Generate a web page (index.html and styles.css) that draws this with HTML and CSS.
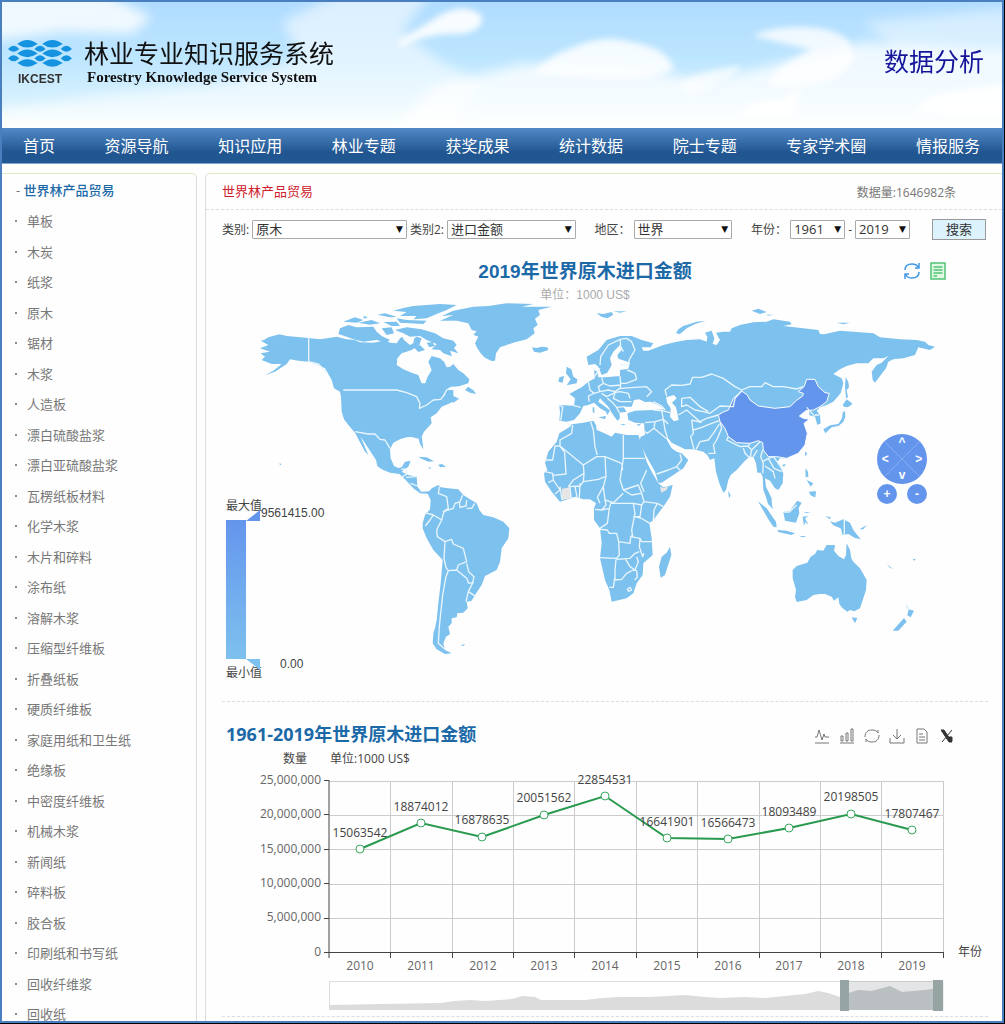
FILE: index.html
```html
<!DOCTYPE html>
<html lang="zh-CN">
<head>
  <meta charset="UTF-8">
  <meta name="viewport" content="width=device-width, initial-scale=1.0">
  <title>林业专业知识服务系统 - 数据分析</title>
  <link rel="stylesheet" href="styles.css">
</head>
<body>
<div class="page">

  <header class="banner">
    <!-- Sky behind the banner -->
    <svg class="sky" viewBox="0 0 1000 126" preserveAspectRatio="none" aria-hidden="true">
      <defs>
        <filter id="soft" x="-10%" y="-30%" width="120%" height="160%"><feGaussianBlur stdDeviation="6"/></filter>
        <filter id="crisp" x="-10%" y="-30%" width="120%" height="160%"><feGaussianBlur stdDeviation="3"/></filter>
      </defs>
      <g fill="#fff" filter="url(#soft)">
        <path d="M-20 -10H100L150 15L130 32L60 30L-20 40Z" opacity=".8"/>
        <path d="M280 20L340 -10H430L400 30L440 60L480 80L440 140H-20V110L120 90L230 80L300 55Z" opacity=".55"/>
        <path d="M430 85L520 62L640 66L700 80L760 66L860 40L1020 50V140H380Z" opacity=".75"/>
        <path d="M860 20L1020 5V60L900 50Z" opacity=".45"/>
      </g>
      <g fill="#fff" filter="url(#crisp)">
        <path d="M395 40L440 12Q465 0 480 14Q482 30 455 32Q430 30 400 44Z" opacity=".9"/>
        <path d="M530 72Q545 54 570 46Q600 32 630 40Q665 46 672 66Q660 78 610 76Z" opacity=".85"/>
        <path d="M750 34Q775 22 815 26Q845 30 850 46Q860 60 830 78Q800 86 765 84Q770 66 810 48Z" opacity=".8"/>
        <path d="M675 84Q690 68 740 64Q730 80 690 92Z" opacity=".7"/>
        <path d="M735 116Q750 94 780 98L800 84L790 116ZM910 112Q925 90 960 88L1010 82V116Z" opacity=".9"/>
      </g>
    </svg>
    <div class="logo">
      <svg class="logo-mark" viewBox="0 0 194 84" aria-hidden="true">
        <g fill="#1593e0">
          <path d="M28 12Q58 -12 90 12Q58 34 28 12ZM104 12Q134 -12 166 12Q134 34 104 12Z"/>
          <path d="M28 41Q58 17 90 41Q58 63 28 41ZM104 41Q134 17 166 41Q134 63 104 41Z"/>
          <path d="M28 70Q58 46 90 70Q58 92 28 70ZM104 70Q134 46 166 70Q134 92 104 70Z"/>
          <path d="M0 27Q17 8 34 27Q17 44 0 27ZM80 27Q97 8 114 27Q97 44 80 27ZM160 27Q177 8 194 27Q177 44 160 27Z"/>
          <path d="M0 56Q17 37 34 56Q17 73 0 56ZM80 56Q97 37 114 56Q97 73 80 56ZM160 56Q177 37 194 56Q177 73 160 56Z"/>
        </g>
      </svg>
      <span class="logo-text">IKCEST</span>
    </div>
    <div class="site-name">
      <h1>林业专业知识服务系统</h1>
      <p>Forestry Knowledge Service System</p>
    </div>
    <div class="banner-title">数据分析</div>
  </header>

  <nav class="main-nav">
    <a href="#">首页</a>
    <a href="#">资源导航</a>
    <a href="#">知识应用</a>
    <a href="#">林业专题</a>
    <a href="#">获奖成果</a>
    <a href="#">统计数据</a>
    <a href="#">院士专题</a>
    <a href="#">专家学术圈</a>
    <a href="#">情报服务</a>
  </nav>

  <div class="content">
    <!-- Left menu -->
    <aside class="sidebar">
      <h2><span>-</span> 世界林产品贸易</h2>
      <ul>
        <li><a href="#">单板</a></li>
        <li><a href="#">木炭</a></li>
        <li><a href="#">纸浆</a></li>
        <li><a href="#">原木</a></li>
        <li><a href="#">锯材</a></li>
        <li><a href="#">木浆</a></li>
        <li><a href="#">人造板</a></li>
        <li><a href="#">漂白硫酸盐浆</a></li>
        <li><a href="#">漂白亚硫酸盐浆</a></li>
        <li><a href="#">瓦楞纸板材料</a></li>
        <li><a href="#">化学木浆</a></li>
        <li><a href="#">木片和碎料</a></li>
        <li><a href="#">涂布纸</a></li>
        <li><a href="#">溶解木浆</a></li>
        <li><a href="#">压缩型纤维板</a></li>
        <li><a href="#">折叠纸板</a></li>
        <li><a href="#">硬质纤维板</a></li>
        <li><a href="#">家庭用纸和卫生纸</a></li>
        <li><a href="#">绝缘板</a></li>
        <li><a href="#">中密度纤维板</a></li>
        <li><a href="#">机械木浆</a></li>
        <li><a href="#">新闻纸</a></li>
        <li><a href="#">碎料板</a></li>
        <li><a href="#">胶合板</a></li>
        <li><a href="#">印刷纸和书写纸</a></li>
        <li><a href="#">回收纤维浆</a></li>
        <li><a href="#">回收纸</a></li>
      </ul>
    </aside>

    <main class="panel">
      <div class="panel-head">
        <h2>世界林产品贸易</h2>
        <span>数据量:1646982条</span>
      </div>

      <form class="filters">
        <label for="type1">类别:</label>
        <span class="select grow-3"><select id="type1"><option>原木</option></select></span>
        <label for="type2">类别2:</label>
        <span class="select grow-2"><select id="type2"><option>进口金额</option></select></span>
        <label for="area" class="spaced">地区：</label>
        <span class="select grow-1"><select id="area"><option>世界</option></select></span>
        <label for="year_from" class="spaced">年份：</label>
        <span class="select year"><select id="year_from"><option>1961</option></select></span>
        <span>-</span>
        <span class="select year"><select id="year_to" aria-label="结束年份"><option>2019</option></select></span>
        <button type="button" class="search">搜索</button>
      </form>

      <!-- World map -->
      <section class="map-section">
        <div class="map-head">
          <h3>2019年世界原木进口金额</h3>
          <p>单位：1000 US$</p>
          <div class="map-tools">
            <button type="button" aria-label="还原">
              <svg viewBox="0 0 18 18" fill="none" stroke="#3f97e6" stroke-width="1.5"><path d="M2 8C2 4 5 2 9 2C12 2 14 3 15 5M16 1V6H12M16 10C16 14 13 16 9 16C6 16 4 15 3 13M2 17V12H6"/></svg>
            </button>
            <button type="button" aria-label="数据视图">
              <svg viewBox="0 0 18 18" fill="#e2f8e5" stroke="#52c473" stroke-width="1.5"><path d="M2 1H16V17H2ZM4.500 5H13.500M4.500 8H13.500M4.500 11H13.500M4.500 14H8"/></svg>
            </button>
          </div>
        </div>

        <div class="map">
          <svg class="world" viewBox="-54 36 2298 1164" role="img" aria-label="世界地图">
            <!-- North America -->
            <g class="land">
              <path d="M62 152L72 150L82 143L90 140L118 133L140 138L206 144L240 148L265 144L290 140L320 148L345 150L360 157L400 158L430 152L452 158L470 160L480 145L487 140L492 150L510 165L520 160L522 146L530 140L545 145L538 165L515 180L485 190L472 205L470 225L490 238L515 248L535 255L540 268L545 280L556 280L562 262L575 240L565 215L575 198L600 205L612 215L620 232L630 230L640 222L655 240L670 250L688 268L685 280L660 288L630 292L618 300L640 300L640 318L655 325L630 340L605 350L590 370L572 382L575 400L552 425L545 440L548 460L550 478L540 462L536 446L515 441L500 442L480 448L460 458L450 478L452 505L462 528L475 534L485 532L495 515L512 512L505 530L485 545L505 555L530 560L532 590L545 605L568 604L572 612L540 610L520 595L495 568L478 552L450 548L425 538L412 528L408 510L385 475L362 440L368 455L385 495L375 485L345 428L325 405L312 388L305 365L303 320L300 305L282 295L275 270L265 252L255 235L235 225L206 215L175 212L150 208L140 222L105 245L75 256L100 242L125 222L95 222L65 210L75 200L62 190L90 185L60 175L85 165Z"/>
              <path d="M300 115L325 105L350 112L400 110L410 125L425 138L450 150L440 158L410 150L370 155L340 148L320 140L295 132ZM310 95L345 82L370 90L350 98ZM355 98L395 90L420 100L390 104ZM370 78L384 82L372 86ZM430 96L470 95L480 108L455 108ZM412 74L435 70L470 80L450 82ZM425 115L455 112L462 130L440 135Z"/>
              <path d="M465 120L500 112L545 118L585 130L610 145L640 152L650 165L642 174L655 190L630 182L636 199L610 190L600 180L575 178L590 162L560 150L540 138L510 140L490 130Z"/>
              <path d="M460 62L490 54L520 48L600 42L650 45L620 60L590 72L560 85L520 88L530 78L480 78L500 66ZM470 85L500 90L560 92L550 102L480 98ZM520 170L540 165L555 180L535 186ZM560 158L578 156L584 168L568 172Z"/>
              <path d="M600 92L640 75L605 78L640 62L700 50L745 48L800 40L880 42L845 50L935 50L895 60L900 75L885 86L893 105L880 115L884 130L860 148L820 158L800 165L780 172L768 190L765 212L755 213L735 203L722 190L712 175L705 160L715 140L700 134L710 124L695 120L685 100L650 92Z"/>
              <path d="M876 172L890 174L905 170L922 172L925 180L900 188L882 185ZM685 290L695 298L700 300L708 312L690 308L675 300ZM632 332L660 325L640 338ZM285 288L300 292L314 310L305 309ZM535 500L560 502L582 514L565 515L545 506ZM595 524L606 522L618 530L600 532ZM564 532L576 534L568 536ZM118 520L125 522L120 526Z"/>
              <path class="border" d="M206 144V215M206 215L235 222L262 250M310 300H470L500 308L530 320L540 340L538 355L560 345L580 330L602 328L615 312L610 318L620 300L640 290M345 425L385 432L405 432L420 448L435 450L450 475M484 538L498 537L500 552L485 562M498 562L528 560M512 580L532 588M540 604L548 598"/>
            </g>

            <!-- South America -->
            <g class="land" transform="translate(-120 570)">
              <path d="M682 40L695 25L715 15L722 22L745 25L775 28L790 45L810 58L830 70L838 90L850 105L880 112L910 125L928 145L925 175L905 205L900 245L890 270L855 288L845 315L825 345L815 362L800 365L803 385L790 398L772 400L770 412L755 415L755 430L745 440L750 462L738 470L730 490L735 510L755 520L735 522L710 508L698 490L700 460L705 444L710 420L715 370L722 310L728 240L700 210L680 175L668 145L668 130L675 105L690 88L692 60ZM782 495L796 493L790 498Z"/>
              <path class="border" d="M718 20L715 40L740 50L745 85L730 95L760 85L765 70L780 65L788 45M800 60L798 78L780 82L778 66M824 70L815 85L800 85M675 98L700 105L725 120L732 95M676 138L690 120L700 105M725 120L710 150L712 170L735 185L732 235L738 262L745 272L738 290L728 345L722 400L718 440L715 490L735 508M735 185L755 178L760 192L790 205L800 245L775 255L770 270L745 272M770 270L800 295L806 310L818 308L822 290L806 275L800 250M820 305L805 335L828 350M805 335L798 365"/>
            </g>

            <!-- Europe and Asia -->
            <g class="land" transform="translate(840 0)">
              <path d="M118 345L162 347L165 325L148 312L165 302L185 292L205 275L225 265L222 240L232 245L235 262L255 262L300 258L300 240L325 236L330 218L318 214L295 206L292 195L305 180L300 165L280 185L270 205L275 225L262 248L245 255L235 230L225 222L205 225L200 200L235 180L260 150L300 138L335 138L365 150L400 160L392 172L365 172L370 182L385 182L430 165L470 155L500 150L540 148L560 155L562 140L555 128L575 122L583 145L578 162L590 165L600 150L588 128L610 125L630 125L635 115L660 105L700 97L740 95L760 88L810 95L815 103L790 108L850 115L895 120L900 132L912 133L960 122L1000 125L1060 130L1080 142L1140 148L1190 150L1215 155L1225 165L1245 170L1230 180L1195 172L1185 195L1150 205L1120 208L1105 215L1098 235L1075 265L1065 278L1058 270L1055 245L1070 225L1085 218L1105 198L1090 205L1060 205L1045 220L1010 220L980 228L960 238L940 252L965 265L970 280L962 310L940 335L920 345L900 352L890 362L900 375L902 400L892 405L885 380L868 376L868 362L858 362L838 378L850 385L868 388L852 400L862 430L855 465L835 490L800 505L780 505L772 515L790 550L788 580L775 600L765 595L750 572L735 565L738 590L755 625L756 655L746 640L734 610L730 600L728 560L722 548L712 548L708 520L700 500L688 500L672 515L650 540L632 555L625 570L618 600L610 608L598 580L588 545L583 505L570 510L562 495L550 485L520 478L495 478L480 470L455 458L442 442L438 445L455 475L470 485L485 490L505 510L490 535L460 555L425 578L415 578L405 545L380 500L358 455L362 440L375 435L372 400L345 398L325 390L322 370L345 362L400 360L435 358L415 345L392 335L375 336L358 328L342 330L335 350L310 350L320 365L298 368L300 385L292 392L275 368L265 350L250 335L240 325L235 335L262 355L270 362L262 375L258 365L240 355L222 338L205 345L190 348L180 370L162 390L140 395L118 392L120 370Z"/>
              <path d="M140 230L154 238L160 260L172 268L170 280L140 286L152 268L138 250ZM118 262L132 258L128 278L115 275ZM218 352L223 352L223 370L218 366ZM235 382L258 378L255 388ZM300 402L318 402L310 406ZM350 404L365 400L356 408ZM468 130L475 118L490 108L530 95L557 92L525 102L500 115L480 132ZM230 70L250 72L275 66L280 74L262 85L244 80ZM280 64L320 64L300 68ZM695 62L715 56L740 66L720 72ZM738 74L760 74L745 77ZM950 98L990 98L970 103Z"/>
              <path d="M910 418L930 406L955 402L966 385L968 368L975 362L976 380L970 396L955 408L935 412L916 430ZM968 345L980 328L998 341L984 352L972 350ZM977 262L985 276L987 292L980 300L984 322L978 325L975 290ZM855 485L862 490L856 500ZM787 524L797 522L792 532ZM624 602L632 616L627 625ZM856 535L864 545L865 560L857 562ZM860 570L880 580L872 590ZM870 608L886 604L884 622L874 616Z"/>
              <path class="sea" d="M438 322L462 315L470 325L456 338L468 352L472 370L476 390L462 394L450 380L452 355L442 340Z"/>
              <path class="china" d="M595 375L610 366L625 360L640 325L655 312L665 303L682 315L690 330L715 348L765 355L810 350L828 332L848 318L850 310L835 305L852 290L860 268L885 268L895 290L915 308L928 310L920 335L900 350L880 360L858 362L838 378L850 385L868 388L852 400L862 430L855 465L835 490L800 505L770 500L745 500L730 480L728 458L715 452L690 460L650 458L625 440L615 415L600 395Z"/>
              <path class="border" d="M435 300L455 285L485 286L510 282L518 262L545 262L575 252L610 265L645 290L665 300L690 290L725 290L735 278L760 290L790 290L830 297L850 290M435 300L440 318M485 325L485 350L500 345L525 360L550 365L570 370L600 348L640 350L645 325L665 303M485 325L510 322L540 350L565 365M475 375L500 360L540 395L560 385L595 375M515 390L520 430L512 440L522 478M520 420L545 412L575 400L598 392M515 390L545 398M598 402L580 430L565 450L540 455L528 478M600 395L605 415L590 450L580 465L585 490L565 490M625 440L620 450L660 470L685 468L690 460M670 475L675 490L690 505L695 480L685 470M695 480L720 455M700 500L712 480M728 480L722 500L730 520L728 550M728 515L745 505L762 535L785 545M735 528L760 545L765 565M745 505L760 500L790 540M860 352L885 380M885 375L898 375"/>
              <path class="border" d="M240 225L242 200L265 165L300 148L320 145L335 155L345 180L330 205L325 218M300 148L302 165M300 225L325 225M325 240L345 250L350 268L318 280L300 280M345 250L320 240M300 258L302 285L270 288L250 280L245 262M205 275L210 300L222 310L205 318L208 335M222 310L240 305L235 290L250 280M240 305L265 300L285 305L300 295L302 285M300 295L345 292L380 290L395 305L380 320M245 310L260 320L285 308L300 305L325 310L330 325M285 308L280 325L300 335L335 335M262 325L280 340L290 352L298 368M290 352L315 350M162 347L182 352M128 352L122 392M240 235L220 265M118 345L130 352M400 335L425 348L435 360M400 360L425 362L430 388L445 402M425 362L450 368M430 388L405 395L375 398M430 388L435 420L442 442M405 395L402 415L382 430L375 425M402 415L438 445M410 552L445 540L470 530L480 540M470 530L485 510L480 492M310 185L300 165"/>
            </g>

            <!-- Africa -->
            <g class="land" transform="translate(840 0)">
              <path d="M155 403L190 398L220 392L228 405L230 420L250 428L275 440L285 428L320 435L355 435L365 465L380 515L395 545L415 580L430 592L458 585L450 620L430 650L400 690L388 700L395 745L398 795L370 820L368 855L350 880L340 910L320 925L275 935L268 900L255 870L240 805L245 760L240 715L222 690L222 655L228 640L210 628L190 628L165 620L120 635L95 605L75 575L72 550L82 540L75 520L85 485L110 455L118 430L150 410ZM450 770L454 795L435 855L422 863L417 830L425 800L440 788Z"/>
              <path class="nodata" d="M126 596L150 592L154 625L126 630ZM420 590L432 594L446 586L440 600L424 608Z"/>
              <path class="border" d="M158 405L155 430L120 450L120 468L190 525L230 500L255 500L305 520M212 395L220 420L225 470L232 495M120 468H105L98 510L76 510M120 468L134 488L138 552L100 556M310 435V505H375M310 505L300 570L310 600L355 585L365 610L335 615L310 600M305 520L308 540M255 500L258 560L250 590L232 622L240 640M190 525L192 550L160 570L145 590M192 550L190 575L235 568L255 560M76 545L98 550L100 570L85 578M100 570L120 600L105 612M120 590L126 630M150 592L154 628M165 590L172 625M180 580L178 625M145 590L180 588L190 575M250 590L255 630L280 638L310 610M255 630L258 645L245 660L225 658M245 660L268 655L272 640L340 640L365 645M340 640L345 670L335 720L338 740M365 610L372 635L365 645L360 680H340M372 635L412 640L430 650M380 540L362 580L372 605M400 690L402 660L412 640M345 680L362 684L390 700M268 655L262 700L240 715M240 718L262 720L268 730L290 730L296 755L330 760L332 740L338 735M332 740L360 745L365 755L398 755M360 745L358 770L368 800L372 790M296 755L298 795L290 805L240 803M290 808L330 805L345 790L358 785M288 808L285 840V870L305 868L320 850L340 840L350 842M315 805L330 830L345 840L355 815L350 800M285 860L280 892L268 892M350 842L352 862L344 870M330 892L322 898L326 904L335 900Z"/>
            </g>

            <!-- Oceania and the islands -->
            <g class="land" transform="translate(840 570)">
              <path d="M818 270L830 258L862 248L872 230L885 222L892 210L910 212L920 195L945 195L942 212L955 228L972 238L978 225L980 190L990 210L994 235L1000 245L1020 265L1030 282L1040 300L1038 330L1030 355L1020 385L1003 394L990 390L982 395L968 385L958 372L955 352L942 362L935 350L915 342L900 342L880 345L860 360L830 366L825 350L828 330L818 295ZM995 412L1012 414L1005 430ZM1166 388L1182 392L1172 412L1162 406ZM1156 370L1166 388L1162 384ZM1152 414L1160 425L1135 452L1118 452ZM1100 252L1120 268L1108 262ZM1178 238L1188 236L1183 242Z"/>
              <path d="M916 108L932 112L930 118ZM930 124L945 128L970 118L990 128L1000 150L1022 178L1005 174L985 162L968 165L962 145L940 136ZM1018 148L1040 136L1030 148ZM714 64L740 85L768 125L770 142L760 140L745 118ZM772 150L800 152L825 160L815 165L775 156ZM790 95L810 92L832 62L845 68L836 84L838 100L828 128L795 122ZM848 110L865 108L855 115L866 135L856 126L852 138ZM735 38L748 56L760 88L744 72ZM866 35L888 34L886 52L872 46ZM850 96L872 96L860 99ZM836 167L860 169L848 172Z"/>
              <path class="border" d="M973 118V166M792 96L808 96L830 75"/>
            </g>
          </svg>

          <div class="visual-map">
            <span>最大值</span>
            <div class="visual-bar">
              <svg viewBox="0 0 34 160" aria-hidden="true">
                <defs>
                  <linearGradient id="range" x1="0" y1="0" x2="0" y2="1">
                    <stop offset="0" stop-color="#6495ed"/>
                    <stop offset="1" stop-color="#7dc1ee"/>
                  </linearGradient>
                </defs>
                <path d="M0 10H20V149H0Z" fill="url(#range)"/>
                <path d="M20 11L34 0V11Z" fill="#6495ed"/>
                <path d="M20 149H34V160Z" fill="#7dc1ee"/>
              </svg>
              <span class="max">9561415.00</span>
              <span class="min">0.00</span>
            </div>
            <span>最小值</span>
          </div>

          <div class="roam">
            <div class="roam-pad">
              <button type="button" aria-label="上移">^</button>
              <button type="button" aria-label="左移">&lt;</button>
              <button type="button" aria-label="右移">&gt;</button>
              <button type="button" aria-label="下移">v</button>
            </div>
            <div class="roam-zoom">
              <button type="button" aria-label="放大">+</button>
              <button type="button" aria-label="缩小">-</button>
            </div>
          </div>
        </div>
      </section>

      <!-- Line chart -->
      <section class="chart-section">
        <div class="chart-head">
          <h3>1961-2019年世界原木进口金额</h3>
          <div class="chart-tools">
            <button type="button" aria-label="折线图"><svg viewBox="0 0 16 16"><path d="M1 9H3L5 2L8 12L10 6L11 9H15M1 15H15"/></svg></button>
            <button type="button" aria-label="柱状图"><svg viewBox="0 0 16 16"><path d="M2 13V8H4V13ZM7 13V5H9V13ZM12 13V1H14V13ZM1 15H15"/></svg></button>
            <button type="button" aria-label="还原"><svg viewBox="0 0 16 16"><path d="M1 9C1 4 4 2 8 2C11 2 13 3 14 5V2M15 7C15 12 12 14 8 14C5 14 3 13 2 11V14"/></svg></button>
            <button type="button" aria-label="保存"><svg viewBox="0 0 16 16"><path d="M8 1V11M4 7L8 11L12 7M1 10V15H15V10"/></svg></button>
            <button type="button" aria-label="数据视图"><svg viewBox="0 0 16 16"><path d="M3 1H10L13 4V15H3ZM5 6H9M5 9H11M5 12H11"/></svg></button>
            <button type="button" aria-label="导出"><svg viewBox="0 0 16 16" class="excel"><path d="M2 2H5L13 14H10ZM13 2L3 14M10 9H13V13H10"/></svg></button>
          </div>
        </div>

        <svg class="chart" viewBox="222 748 766 268" role="img" aria-label="1961-2019年世界原木进口金额">
          <g class="grid">
            <path d="M329 781.500H943M329 815.500H943M329 849.500H943M329 884.500H943M329 918.500H943"/>
            <path d="M390.500 781V952M452.500 781V952M513.500 781V952M574.500 781V952M636.500 781V952M697.500 781V952M759.500 781V952M820.500 781V952M881.500 781V952M943.500 781V952"/>
          </g>
          <path class="axis" d="M329 780V958M324 780.500H329M324 814.500H329M324 849.500H329M324 883.500H329M324 918.500H329M324 952.500H943.500M390.500 952V958M452.500 952V958M513.500 952V958M574.500 952V958M636.500 952V958M697.500 952V958M759.500 952V958M820.500 952V958M881.500 952V958M943.500 952V958"/>
          <g class="dark">
            <text x="283" y="763">数量</text>
            <text x="330" y="763">单位:1000 US$</text>
            <text x="958" y="956">年份</text>
          </g>
          <g text-anchor="end">
            <text x="321" y="784">25,000,000</text>
            <text x="321" y="818">20,000,000</text>
            <text x="321" y="853">15,000,000</text>
            <text x="321" y="887">10,000,000</text>
            <text x="321" y="921">5,000,000</text>
            <text x="321" y="956">0</text>
          </g>
          <g text-anchor="middle">
            <text x="360" y="970">2010</text>
            <text x="421" y="970">2011</text>
            <text x="483" y="970">2012</text>
            <text x="544" y="970">2013</text>
            <text x="605" y="970">2014</text>
            <text x="667" y="970">2015</text>
            <text x="728" y="970">2016</text>
            <text x="789" y="970">2017</text>
            <text x="851" y="970">2018</text>
            <text x="912" y="970">2019</text>
          </g>
          <path class="line" d="M360 849L421 823L482 837L544 815L605 796L667 838L728 839L789 828L851 814L912 830"/>
          <g class="points">
            <circle cx="360" cy="849" r="4"/>
            <circle cx="421" cy="823" r="4"/>
            <circle cx="482" cy="837" r="4"/>
            <circle cx="544" cy="815" r="4"/>
            <circle cx="605" cy="796" r="4"/>
            <circle cx="667" cy="838" r="4"/>
            <circle cx="728" cy="839" r="4"/>
            <circle cx="789" cy="828" r="4"/>
            <circle cx="851" cy="814" r="4"/>
            <circle cx="912" cy="830" r="4"/>
          </g>
          <g class="dark" text-anchor="middle">
            <text x="360" y="837">15063542</text>
            <text x="421" y="811">18874012</text>
            <text x="482" y="824">16878635</text>
            <text x="544" y="802">20051562</text>
            <text x="605" y="784">22854531</text>
            <text x="667" y="826">16641901</text>
            <text x="728" y="827">16566473</text>
            <text x="789" y="816">18093489</text>
            <text x="851" y="801">20198505</text>
            <text x="912" y="818">17807467</text>
          </g>
          <!-- Zoom slider -->
          <path d="M329.500 981.500H943V1009.500H329.500Z" fill="#fff" stroke="#ddd"/>
          <path d="M330 1005L380 1004L440 1003L455 1001L470 1000L485 1001L512 999L522 996L535 997L541 1000L585 1000L602 998L620 997L650 997L685 995L705 997L720 998L745 997L765 998L785 996L805 994L818 991L828 993L840 997L850 993L858 990L872 991L890 986L902 992L925 990L943 988V1010H330Z" fill="#dcdcdc"/>
          <path d="M844 981H938V1010H844Z" fill="#90979c" fill-opacity=".25"/>
          <path d="M844 994L858 990L872 991L890 986L902 992L925 990L938 988V1010H844Z" fill="#8f9ba5" fill-opacity=".25"/>
          <path d="M840 980H849V1011H840ZM933 980H943V1011H933Z" fill="#96a5a3"/>
        </svg>
      </section>
    </main>
  </div>
</div>
</body>
</html>
```
FILE: styles.css
```css
* {
  box-sizing: border-box;
}
body {
  margin: 0;
  padding: 0 1px 1px 0;
  height: 100vh;
  background-color: #000;
  font-family: "Open Sans", "Noto Sans CJK SC", sans-serif;
  font-size: 12px;
  color: #444;
}
h1, h2, h3, p, ul {
  margin: 0;
  padding: 0;
}
a {
  color: inherit;
  text-decoration: none;
}
button {
  padding: 0;
  border: 0;
  background: none;
  font-family: inherit;
  cursor: pointer;
}
.page {
  display: flex;
  flex-direction: column;
  height: 100%;
  overflow: hidden;
  border: 2px solid #4a7fbf;
  background-color: #fefefe;
}

/* Banner */
.banner {
  display: flex;
  align-items: center;
  position: relative;
  z-index: 0;
  flex: none;
  height: 126px;
  padding: 0 18px 8px 6px;
  background: linear-gradient(to bottom, #b0dcff, #bde6ff 45%, #d8f2fe 80%, #fcfffa);
}
.sky {
  position: absolute;
  top: 0;
  left: 0;
  z-index: -1;
  width: 100%;
  height: 100%;
}
.logo {
  display: flex;
  flex-direction: column;
  align-items: center;
  width: 64px;
  padding-top: 4px;
}
.logo-mark {
  width: 64px;
}
.logo-text {
  margin-top: 4px;
  font: bold 12px/14px "Liberation Sans", sans-serif;
  color: #333;
}
.site-name {
  margin-left: 12px;
  padding-top: 2px;
  color: #111;
}
.site-name h1 {
  font-size: 25px;
  line-height: 30px;
  font-weight: normal;
}
.site-name p {
  padding-left: 3px;
  font: bold 15px/18px "Liberation Serif", serif;
}
.banner-title {
  margin-left: auto;
  font-size: 25px;
  line-height: 36px;
  color: #15159a;
}

/* Navigation */
.main-nav {
  display: flex;
  justify-content: space-between;
  align-items: center;
  flex: none;
  height: 36px;
  padding: 0 22px 2px 21px;
  border-bottom: 1px solid #7ba5d3;
  background: linear-gradient(to bottom, #5289c6, #205590 70%, #215892);
  font-size: 16px;
  color: #fff;
}

.content {
  display: flex;
  flex: 1;
  min-height: 0;
  padding-top: 9px;
}

/* Left menu */
.sidebar {
  display: flex;
  flex-direction: column;
  width: 195px;
  flex: none;
  border-top: 1px solid #dcebc8;
  border-right: 1px solid #ddd;
  border-top-right-radius: 5px;
}
.sidebar h2 {
  padding: 6px 0 11px 14px;
  font-size: 13px;
  line-height: 20px;
  font-weight: 500;
  color: #1c69a8;
}
.sidebar h2 span {
  font-weight: normal;
  color: #777;
}
.sidebar ul {
  display: flex;
  flex-direction: column;
  justify-content: space-between;
  flex: 1;
  margin-bottom: -3px;
  list-style: none;
}
.sidebar li {
  display: flex;
  align-items: center;
  padding-left: 13px;
  font-size: 13px;
  line-height: 20px;
  color: #777;
}
.sidebar li::before {
  content: "";
  width: 2px;
  height: 2px;
  margin-right: 10px;
  background-color: #888;
}

/* Right panel */
.panel {
  flex: 1;
  min-width: 0;
  margin-left: 8px;
  border-top: 1px solid #dcebc8;
  border-left: 1px solid #ddd;
  border-top-left-radius: 5px;
}
.panel-head {
  display: flex;
  justify-content: space-between;
  align-items: center;
  height: 36px;
  padding: 0 46px 0 16px;
  border-bottom: 1px dashed #ddd;
  color: #777;
}
.panel-head h2 {
  padding-bottom: 2px;
  font-size: 13px;
  font-weight: normal;
  color: #d0202c;
}
.filters {
  display: flex;
  align-items: center;
  gap: 3px;
  height: 40px;
  padding: 0 16px 2px;
}
.filters .spaced {
  margin-left: 16px;
}
.select {
  position: relative;
  min-width: 0;
}
.select::after {
  content: "▼";
  position: absolute;
  right: 4px;
  top: 3px;
  font: 9px/12px "DejaVu Sans", sans-serif;
  color: #111;
  pointer-events: none;
}
.grow-3 {
  flex: 154;
}
.grow-2 {
  flex: 128;
}
.grow-1 {
  flex: 98;
}
.year {
  flex: none;
  width: 55px;
}
.select select {
  display: block;
  width: 100%;
  height: 19px;
  padding: 0 3px;
  border: 1px solid #aaa;
  border-radius: 1px;
  background-color: #fff;
  appearance: none;
  font: 13px/17px "Open Sans", "Noto Sans CJK SC", sans-serif;
  color: #333;
}
.search {
  width: 54px;
  height: 21px;
  margin-left: 19px;
  border: 1px solid #999;
  background-color: #dcf2fc;
  font-size: 13px;
  line-height: 18px;
  color: #333;
}

/* Map */
.map-section,
.chart-section {
  margin: 0 14px 0 16px;
  border-bottom: 1px dashed #ddd;
}
.map-head {
  position: relative;
  height: 52px;
  padding: 9px 40px 0 0;
  text-align: center;
}
.map-head h3 {
  font: bold 19px/26px "Liberation Sans", "Noto Sans CJK SC", sans-serif;
  color: #1c69a8;
}
.map-head p {
  font: 12px/20px "Liberation Sans", "Noto Sans CJK SC", sans-serif;
  color: #aaa;
}
.map-tools {
  position: absolute;
  top: 12px;
  right: 41px;
  display: flex;
  gap: 8px;
}
.map-tools svg {
  display: block;
  width: 18px;
}
.map {
  position: relative;
  padding-bottom: 11px;
}
.world {
  display: block;
  width: 100%;
}
.land {
  fill: #7dc1ee;
}
.land .china {
  fill: #6495ed;
  stroke: #fff;
  stroke-width: 3;
}
.land .sea {
  fill: #fefefe;
}
.land .nodata {
  fill: #e6e6e6;
}
.land .border {
  fill: none;
  stroke: #eaf6fd;
  stroke-width: 4;
  stroke-linejoin: round;
}
.visual-map {
  position: absolute;
  left: 4px;
  bottom: 21px;
  display: flex;
  flex-direction: column;
  font: 12px/14px "Liberation Sans", "Noto Sans CJK SC", sans-serif;
}
.visual-bar {
  display: flex;
  position: relative;
  margin: -3px 0 -4px;
}
.visual-bar svg {
  width: 34px;
  height: 160px;
}
.visual-bar .max {
  position: absolute;
  left: 35px;
  top: -4px;
}
.visual-bar .min {
  position: absolute;
  left: 54px;
  bottom: -1px;
}
.roam {
  position: absolute;
  top: 33%;
  right: 61px;
  width: 50px;
}
.roam-pad {
  display: grid;
  grid-template-areas: ". up ." "left . right" ". down .";
  grid-template-columns: 1fr 1fr 1fr;
  grid-template-rows: 1fr 1fr 1fr;
  height: 50px;
  border-radius: 50%;
  background:
    linear-gradient(45deg, transparent 49%, #86adf2 50%, transparent 51%),
    linear-gradient(135deg, transparent 49%, #86adf2 50%, transparent 51%),
    #6495ed;
}
.roam button {
  color: #fff;
  font: bold 12px/16px "Liberation Sans", sans-serif;
}
.roam-pad button:nth-child(1) {
  grid-area: up;
}
.roam-pad button:nth-child(2) {
  grid-area: left;
}
.roam-pad button:nth-child(3) {
  grid-area: right;
}
.roam-pad button:nth-child(4) {
  grid-area: down;
}
.roam-zoom {
  display: flex;
  justify-content: space-between;
}
.roam-zoom button {
  width: 20px;
  height: 20px;
  border-radius: 50%;
  background-color: #6495ed;
}

/* Line chart */
.chart-head {
  display: flex;
  justify-content: space-between;
  align-items: center;
  height: 46px;
  padding: 18px 33px 0 4px;
}
.chart-head h3 {
  font-size: 18px;
  line-height: 28px;
  color: #1c69a8;
}
.chart-tools {
  display: flex;
  gap: 9px;
  padding-top: 4px;
}
.chart-tools svg {
  display: block;
  width: 16px;
  fill: none;
  stroke: #777;
}
.chart-tools .excel {
  fill: #333;
  stroke: #333;
}
.chart {
  display: block;
  width: 100%;
  fill: #666;
  font-size: 12px;
}
.chart .grid {
  stroke: #ccc;
}
.chart .axis {
  fill: none;
  stroke: #444;
}
.chart .dark {
  fill: #444;
}
.chart .line {
  fill: none;
  stroke: #2a9a50;
  stroke-width: 2;
}
.chart .points {
  fill: #fff;
  stroke: #3aa860;
}
```
